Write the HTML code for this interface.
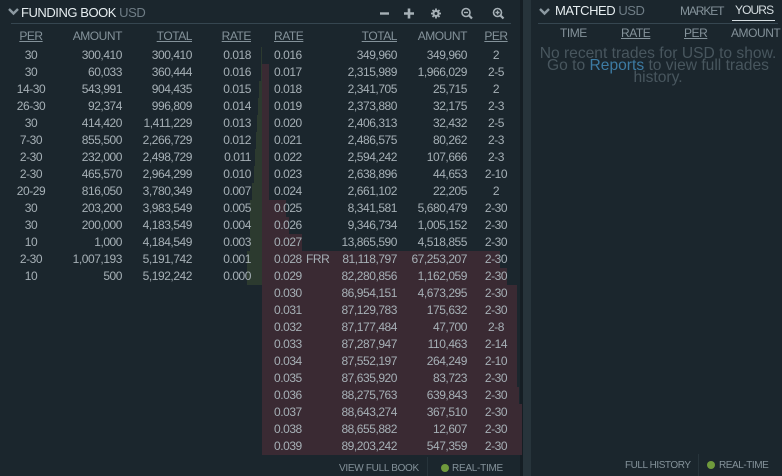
<!DOCTYPE html>
<html>
<head>
<meta charset="utf-8">
<style>
html,body{margin:0;padding:0;background:#1b262d;}
#p{position:relative;width:782px;height:476px;overflow:hidden;background:#1b262d;font-family:"Liberation Sans",sans-serif;font-size:12px;letter-spacing:-.45px;color:#a6b0b6;}
#p div,#p span.a{position:absolute;white-space:nowrap;}
.r{left:0;width:530px;height:17px;line-height:17px;}
.r span{position:absolute;top:0;}
.l1{left:11px;width:40px;text-align:center;}
.l2{left:62px;width:60px;text-align:right;}
.l3{left:132px;width:60px;text-align:right;}
.l4{left:191px;width:60px;text-align:right;}
.r1{left:274px;}
.rf{left:306px;}
.r2{left:327px;width:70px;text-align:right;}
.r3{left:397px;width:70px;text-align:right;}
.r4{left:476px;width:40px;text-align:center;}
.h{color:#84929a;}
.u{text-decoration:underline;}
.g{position:absolute;background:#2c3a2f;}
.d{position:absolute;background:#3a2a33;}
.ttl{font-size:13px;color:#e6edf0;height:16px;line-height:16px;letter-spacing:-.45px;}
.usd{color:#6f7d86;}
.ft{font-size:10px;color:#84929a;height:14px;line-height:14px;}
.dot{width:8px;height:8px;border-radius:50%;background:#6f9a3c;}
.msg{font-size:15.6px;letter-spacing:0;line-height:12px;color:#48565e;text-align:center;left:536px;width:244px;}
</style>
</head>
<body>
<div id="p">
<div style="left:520px;top:0;width:3px;height:476px;background:#151e24"></div>
<div style="left:523px;top:0;width:8px;height:476px;background:#27343b"></div>

<svg style="position:absolute;left:0;top:0" width="782" height="30" fill="none" stroke="#8c99a1">
<path d="M9 9l4.5 4.5L18 9" stroke-width="2.4"/>
<path d="M540 9l4.5 4.5L549 9" stroke-width="2.4"/>
<path d="M380 13.5h9" stroke="#a6b0b6" stroke-width="2.4"/>
<path d="M404 13.5h10M409 8.5v10" stroke="#a6b0b6" stroke-width="2.6"/>
<path d="M436 8.5v10M431 13.5h10M432.5 10l7 7M439.5 10l-7 7" stroke="#a6b0b6" stroke-width="1.8"/>
<circle cx="436" cy="13.5" r="3.6" fill="#a6b0b6" stroke="none"/>
<circle cx="436" cy="13.5" r="1.5" fill="#1b262d" stroke="none"/>
<circle cx="466" cy="12.5" r="4" stroke="#a6b0b6" stroke-width="1.6"/>
<path d="M469 15.5l3 3" stroke="#a6b0b6" stroke-width="2.2"/>
<path d="M464 12.5h4" stroke="#a6b0b6" stroke-width="1.4"/>
<circle cx="497.5" cy="12.5" r="4" stroke="#a6b0b6" stroke-width="1.6"/>
<path d="M500.5 15.5l3 3" stroke="#a6b0b6" stroke-width="2.2"/>
<path d="M495.5 12.5h4M497.5 10.5v4" stroke="#a6b0b6" stroke-width="1.4"/>
</svg>

<div class="ttl" style="left:21px;top:4.5px">FUNDING BOOK <span class="usd">USD</span></div>
<div style="left:11px;top:23px;width:500px;height:1px;background:#364650"></div>
<div style="left:538px;top:23px;width:240px;height:1px;background:#364650"></div>

<div class="ttl" style="left:555px;top:2.5px">MATCHED <span class="usd">USD</span></div>
<div class="h" style="left:680px;top:3px;font-size:12px;letter-spacing:-1.1px;line-height:16px">MARKET</div>
<div style="left:735px;top:2px;font-size:12px;letter-spacing:-.9px;line-height:16px;color:#d5dde1">YOURS</div>
<div style="left:732px;top:20px;width:43px;height:1px;background:#d5dde1"></div>

<!-- depth green -->
<i class="g" style="left:261px;top:47px;width:1px;height:34px"></i>
<i class="g" style="left:259px;top:81px;width:3px;height:17px"></i>
<i class="g" style="left:258px;top:98px;width:4px;height:17px"></i>
<i class="g" style="left:257px;top:115px;width:5px;height:17px"></i>
<i class="g" style="left:256px;top:132px;width:6px;height:17px"></i>
<i class="g" style="left:255px;top:149px;width:7px;height:17px"></i>
<i class="g" style="left:254px;top:166px;width:8px;height:17px"></i>
<i class="g" style="left:252px;top:183px;width:10px;height:17px"></i>
<i class="g" style="left:250px;top:200px;width:12px;height:51px"></i>
<i class="g" style="left:247px;top:251px;width:15px;height:34px"></i>
<!-- depth red -->
<i class="d" style="left:262px;top:64px;width:7px;height:136px"></i>
<i class="d" style="left:262px;top:200px;width:24px;height:17px"></i>
<i class="d" style="left:262px;top:217px;width:27px;height:17px"></i>
<i class="d" style="left:262px;top:234px;width:40px;height:17px"></i>
<i class="d" style="left:262px;top:251px;width:238px;height:17px"></i>
<i class="d" style="left:262px;top:268px;width:245px;height:17px"></i>
<i class="d" style="left:262px;top:285px;width:255px;height:102px"></i>
<i class="d" style="left:262px;top:387px;width:257px;height:17px"></i>
<i class="d" style="left:262px;top:404px;width:260px;height:51px"></i>

<div class="r h" style="top:28px"><span class="l1 u">PER</span><span class="l2">AMOUNT</span><span class="l3 u">TOTAL</span><span class="l4 u">RATE</span><span class="r1 u">RATE</span><span class="r2 u">TOTAL</span><span class="r3">AMOUNT</span><span class="r4 u">PER</span></div>

<div class="r" style="top:47px"><span class="l1">30</span><span class="l2">300,410</span><span class="l3">300,410</span><span class="l4">0.018</span><span class="r1">0.016</span><span class="r2">349,960</span><span class="r3">349,960</span><span class="r4">2</span></div>
<div class="r" style="top:64px"><span class="l1">30</span><span class="l2">60,033</span><span class="l3">360,444</span><span class="l4">0.016</span><span class="r1">0.017</span><span class="r2">2,315,989</span><span class="r3">1,966,029</span><span class="r4">2-5</span></div>
<div class="r" style="top:81px"><span class="l1">14-30</span><span class="l2">543,991</span><span class="l3">904,435</span><span class="l4">0.015</span><span class="r1">0.018</span><span class="r2">2,341,705</span><span class="r3">25,715</span><span class="r4">2</span></div>
<div class="r" style="top:98px"><span class="l1">26-30</span><span class="l2">92,374</span><span class="l3">996,809</span><span class="l4">0.014</span><span class="r1">0.019</span><span class="r2">2,373,880</span><span class="r3">32,175</span><span class="r4">2-3</span></div>
<div class="r" style="top:115px"><span class="l1">30</span><span class="l2">414,420</span><span class="l3">1,411,229</span><span class="l4">0.013</span><span class="r1">0.020</span><span class="r2">2,406,313</span><span class="r3">32,432</span><span class="r4">2-5</span></div>
<div class="r" style="top:132px"><span class="l1">7-30</span><span class="l2">855,500</span><span class="l3">2,266,729</span><span class="l4">0.012</span><span class="r1">0.021</span><span class="r2">2,486,575</span><span class="r3">80,262</span><span class="r4">2-3</span></div>
<div class="r" style="top:149px"><span class="l1">2-30</span><span class="l2">232,000</span><span class="l3">2,498,729</span><span class="l4">0.011</span><span class="r1">0.022</span><span class="r2">2,594,242</span><span class="r3">107,666</span><span class="r4">2-3</span></div>
<div class="r" style="top:166px"><span class="l1">2-30</span><span class="l2">465,570</span><span class="l3">2,964,299</span><span class="l4">0.010</span><span class="r1">0.023</span><span class="r2">2,638,896</span><span class="r3">44,653</span><span class="r4">2-10</span></div>
<div class="r" style="top:183px"><span class="l1">20-29</span><span class="l2">816,050</span><span class="l3">3,780,349</span><span class="l4">0.007</span><span class="r1">0.024</span><span class="r2">2,661,102</span><span class="r3">22,205</span><span class="r4">2</span></div>
<div class="r" style="top:200px"><span class="l1">30</span><span class="l2">203,200</span><span class="l3">3,983,549</span><span class="l4">0.005</span><span class="r1">0.025</span><span class="r2">8,341,581</span><span class="r3">5,680,479</span><span class="r4">2-30</span></div>
<div class="r" style="top:217px"><span class="l1">30</span><span class="l2">200,000</span><span class="l3">4,183,549</span><span class="l4">0.004</span><span class="r1">0.026</span><span class="r2">9,346,734</span><span class="r3">1,005,152</span><span class="r4">2-30</span></div>
<div class="r" style="top:234px"><span class="l1">10</span><span class="l2">1,000</span><span class="l3">4,184,549</span><span class="l4">0.003</span><span class="r1">0.027</span><span class="r2">13,865,590</span><span class="r3">4,518,855</span><span class="r4">2-30</span></div>
<div class="r" style="top:251px"><span class="l1">2-30</span><span class="l2">1,007,193</span><span class="l3">5,191,742</span><span class="l4">0.001</span><span class="r1">0.028</span><span class="rf">FRR</span><span class="r2">81,118,797</span><span class="r3">67,253,207</span><span class="r4">2-30</span></div>
<div class="r" style="top:268px"><span class="l1">10</span><span class="l2">500</span><span class="l3">5,192,242</span><span class="l4">0.000</span><span class="r1">0.029</span><span class="r2">82,280,856</span><span class="r3">1,162,059</span><span class="r4">2-30</span></div>
<div class="r" style="top:285px"><span class="r1">0.030</span><span class="r2">86,954,151</span><span class="r3">4,673,295</span><span class="r4">2-30</span></div>
<div class="r" style="top:302px"><span class="r1">0.031</span><span class="r2">87,129,783</span><span class="r3">175,632</span><span class="r4">2-30</span></div>
<div class="r" style="top:319px"><span class="r1">0.032</span><span class="r2">87,177,484</span><span class="r3">47,700</span><span class="r4">2-8</span></div>
<div class="r" style="top:336px"><span class="r1">0.033</span><span class="r2">87,287,947</span><span class="r3">110,463</span><span class="r4">2-14</span></div>
<div class="r" style="top:353px"><span class="r1">0.034</span><span class="r2">87,552,197</span><span class="r3">264,249</span><span class="r4">2-10</span></div>
<div class="r" style="top:370px"><span class="r1">0.035</span><span class="r2">87,635,920</span><span class="r3">83,723</span><span class="r4">2-30</span></div>
<div class="r" style="top:387px"><span class="r1">0.036</span><span class="r2">88,275,763</span><span class="r3">639,843</span><span class="r4">2-30</span></div>
<div class="r" style="top:404px"><span class="r1">0.037</span><span class="r2">88,643,274</span><span class="r3">367,510</span><span class="r4">2-30</span></div>
<div class="r" style="top:421px"><span class="r1">0.038</span><span class="r2">88,655,882</span><span class="r3">12,607</span><span class="r4">2-30</span></div>
<div class="r" style="top:438px"><span class="r1">0.039</span><span class="r2">89,203,242</span><span class="r3">547,359</span><span class="r4">2-30</span></div>

<div class="h" style="left:560px;top:25px;line-height:17px">TIME</div>
<div class="h u" style="left:621px;top:25px;line-height:17px">RATE</div>
<div class="h u" style="left:684px;top:25px;line-height:17px">PER</div>
<div class="h" style="left:731px;top:25px;line-height:17px">AMOUNT</div>

<div class="msg" style="top:48px">No recent trades for USD to show.<br>Go to <span style="color:#3d7ba3">Reports</span> to view full trades<br>history.</div>

<div class="ft" style="left:339px;top:462px;letter-spacing:-.3px">VIEW FULL BOOK</div>
<div style="left:427px;top:457px;width:1px;height:19px;background:#27343b"></div>
<div class="dot" style="left:441px;top:464px"></div>
<div class="ft" style="left:452px;top:462px;letter-spacing:-.27px">REAL-TIME</div>

<div class="ft" style="left:625px;top:459px;letter-spacing:-.45px">FULL HISTORY</div>
<div style="left:698px;top:454px;width:1px;height:22px;background:#27343b"></div>
<div class="dot" style="left:707px;top:461px"></div>
<div class="ft" style="left:719px;top:459px;letter-spacing:-.45px">REAL-TIME</div>
</div>
</body>
</html>
